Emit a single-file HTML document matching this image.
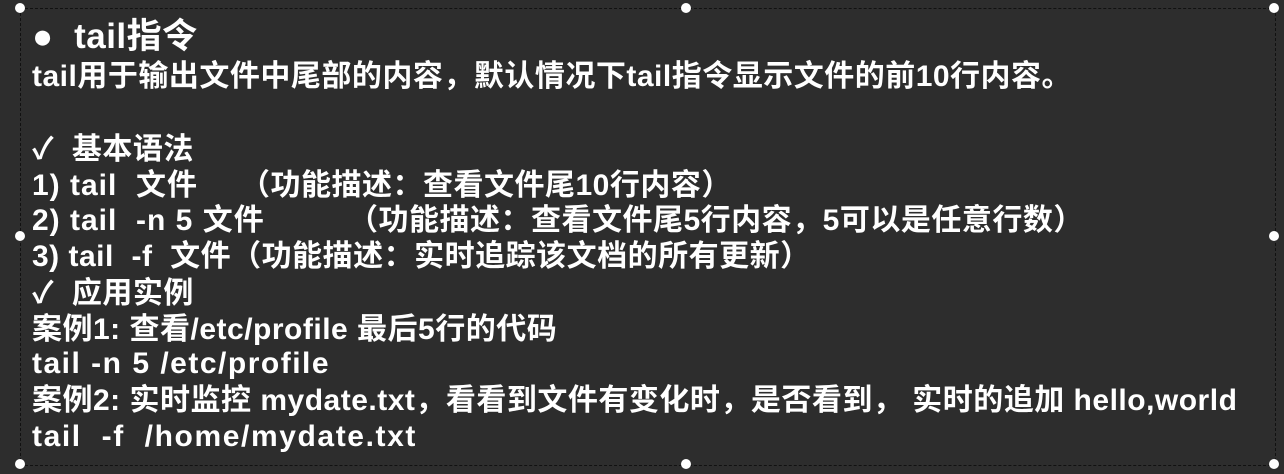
<!DOCTYPE html>
<html><head><meta charset="utf-8"><style>
html,body{margin:0;padding:0}
body{width:1284px;height:474px;overflow:hidden;position:relative;
background:#2d2d2d;
font-family:"Liberation Sans","Noto Sans CJK SC",sans-serif;font-weight:bold;color:#fff}
.l{position:absolute;white-space:pre;font-size:30px;line-height:36px;height:36px;letter-spacing:0.5px}
.box{position:absolute;left:20px;top:8px;width:1254px;height:456px;border:1px dashed #111}
.h{position:absolute;width:10px;height:10px;border-radius:50%;background:#fff;margin:-5px 0 0 -5px}
</style></head><body>
<div class="box"></div>
<div class="h" style="left:20px;top:8px"></div>
<div class="h" style="left:686px;top:8px"></div>
<div class="h" style="left:1274px;top:8px"></div>
<div class="h" style="left:20px;top:236px"></div>
<div class="h" style="left:1274px;top:236px"></div>
<div class="h" style="left:20px;top:464px"></div>
<div class="h" style="left:686px;top:464px"></div>
<div class="h" style="left:1274px;top:464px"></div>

<div class="l" style="left:32px;top:17px;font-size:35px;line-height:40px;height:40px">●&nbsp; tail指令</div>
<div class="l" style="left:32px;top:59px">tail用于输出文件中尾部的内容，默认情况下tail指令显示文件的前10行内容。</div>
<div class="l" style="left:32px;top:132px">✓  基本语法</div>
<div class="l" style="left:32px;top:168px;letter-spacing:1px">1) tail  文件</div>
<div class="l" style="left:240px;top:168px">（功能描述：查看文件尾10行内容）</div>
<div class="l" style="left:32px;top:203px;letter-spacing:1px">2) tail  -n 5 文件</div>
<div class="l" style="left:348px;top:203px">（功能描述：查看文件尾5行内容，5可以是任意行数）</div>
<div class="l" style="left:32px;top:239px">3) tail  -f  文件（功能描述：实时追踪该文档的所有更新）</div>
<div class="l" style="left:32px;top:276px">✓  应用实例</div>
<div class="l" style="left:32px;top:312px">案例1: 查看/etc/profile 最后5行的代码</div>
<div class="l" style="left:32px;top:346px;letter-spacing:1.5px">tail -n 5 /etc/profile</div>
<div class="l" style="left:32px;top:383px">案例2: 实时监控 mydate.txt，看看到文件有变化时，是否看到， 实时的追加 hello,world</div>
<div class="l" style="left:32px;top:419px;letter-spacing:1.6px">tail  -f  /home/mydate.txt</div>
</body></html>
